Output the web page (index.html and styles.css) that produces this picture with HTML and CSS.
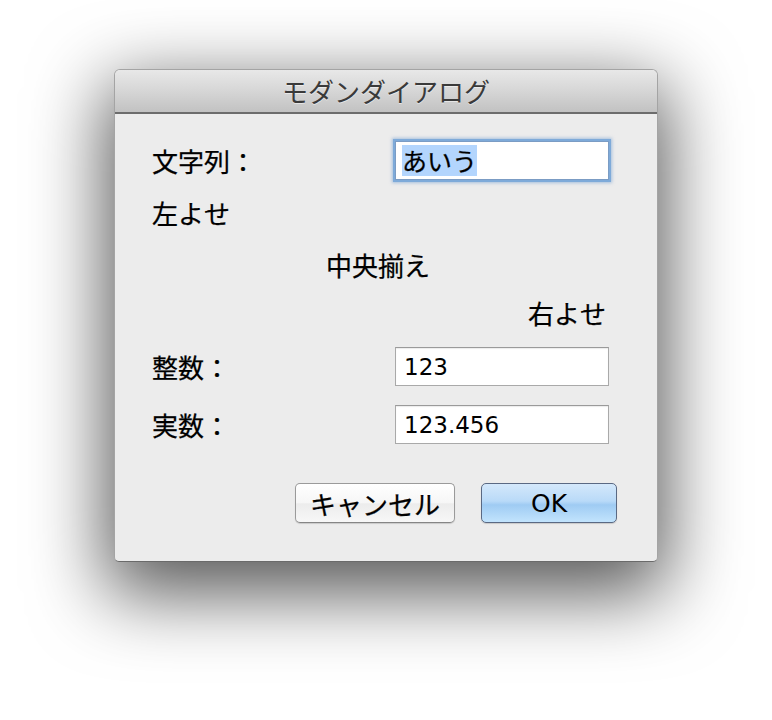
FILE: index.html
```html
<!DOCTYPE html>
<html lang="ja">
<head>
<meta charset="utf-8">
<title>モダンダイアログ</title>
<link rel="stylesheet" href="styles.css">
</head>
<body>
<div class="window">
  <div class="titlebar">モダンダイアログ</div>
  <div class="content">
    <div class="row field">
      <span class="label">文字列：</span>
      <div class="input focused"><span class="sel">あいう</span></div>
    </div>
    <div class="row text left">左よせ</div>
    <div class="row text center">中央揃え</div>
    <div class="row text right">右よせ</div>
    <div class="row field gap19">
      <span class="label">整数：</span>
      <div class="input">123</div>
    </div>
    <div class="row field gap19">
      <span class="label">実数：</span>
      <div class="input">123.456</div>
    </div>
    <div class="buttons">
      <button class="btn">キャンセル</button>
      <button class="btn default">OK</button>
    </div>
  </div>
</div>
</body>
</html>
```

FILE: styles.css
```css
html, body {
  margin: 0;
  padding: 0;
  background: #ffffff;
}

body {
  width: 772px;
  height: 720px;
  overflow: hidden;
  padding-top: 69px;
  box-sizing: border-box;
  font-family: "Noto Sans CJK JP", sans-serif;
}

.window {
  width: 544px;
  margin: 0 auto;
  box-sizing: border-box;
  background: #ececec;
  border: 1px solid #a4a4a4;
  border-bottom-color: #6a6a6a;
  border-radius: 6px 6px 5px 5px;
  box-shadow: 0 24px 75px 8px rgba(0, 0, 0, 0.66);
}

.titlebar {
  height: 42px;
  line-height: 42px;
  text-align: center;
  font-size: 26px;
  color: #3a3a3a;
  text-shadow: 0 1px 0 rgba(255, 255, 255, 0.5);
  background: linear-gradient(#e8e8e8, #d6d6d6 50%, #c2c2c2);
  border-bottom: 2px solid #6c6c6c;
  border-radius: 5px 5px 0 0;
}

.content {
  display: flex;
  flex-direction: column;
  padding: 27px 48px 38px 37px;
}

.row {
  display: flex;
  align-items: center;
  font-size: 26px;
  color: #000;
  -webkit-text-stroke: 0.25px #000;
}

.field {
  height: 39px;
}

.gap19 {
  margin-top: 19px;
}

.text {
  height: 30px;
  line-height: 30px;
}

.left {
  margin-top: 18px;
  justify-content: flex-start;
}

.center {
  margin-top: 22px;
  justify-content: center;
  padding-right: 5px;
}

.right {
  margin-top: 18px;
  justify-content: flex-end;
  padding-right: 3px;
}

.label {
  line-height: 30px;
}

.input {
  margin-left: auto;
  width: 214px;
  height: 39px;
  box-sizing: border-box;
  background: #ffffff;
  border: 1px solid #a9a9a9;
  border-top-color: #9a9a9a;
  box-shadow: inset 0 1px 1px rgba(0, 0, 0, 0.08);
  display: flex;
  align-items: center;
  padding-left: 8px;
  font-family: "DejaVu Sans", "Noto Sans CJK JP", sans-serif;
  font-size: 23px;
  color: #000;
  -webkit-text-stroke: 0;
}

.input.focused {
  padding-left: 6px;
  border-color: #7b9cc4;
  box-shadow: 0 0 0 2px #7eaad9, 0 0 3px 3px rgba(110, 155, 210, 0.55);
}

.sel {
  font-family: "Noto Sans CJK JP", sans-serif;
  font-size: 25px;
  line-height: 31px;
  background: #b3d5fd;
  -webkit-text-stroke: 0.25px #000;
}

.buttons {
  display: flex;
  justify-content: flex-end;
  gap: 26px;
  margin-top: 39px;
  margin-right: -8px;
}

.btn {
  height: 40px;
  box-sizing: border-box;
  border-radius: 5px;
  font-family: "DejaVu Sans", "Noto Sans CJK JP", sans-serif;
  font-size: 25px;
  color: #000;
  padding: 0;
  display: flex;
  align-items: center;
  justify-content: center;
  box-shadow: 0 1px 1px rgba(0, 0, 0, 0.15);
}

.btn:first-child {
  width: 160px;
  border: 1px solid #9a9a9a;
  border-bottom-color: #858585;
  background: linear-gradient(#ffffff, #f6f6f6 50%, #ececec 52%, #f7f7f7);
  font-family: "Noto Sans CJK JP", sans-serif;
  font-size: 26px;
  -webkit-text-stroke: 0.25px #000;
}

.btn.default {
  width: 136px;
  border: 1px solid #5a6983;
  background: linear-gradient(#d4e8fb, #b9daf8 45%, #9fcbf3 55%, #c2e4fd);
}
```
